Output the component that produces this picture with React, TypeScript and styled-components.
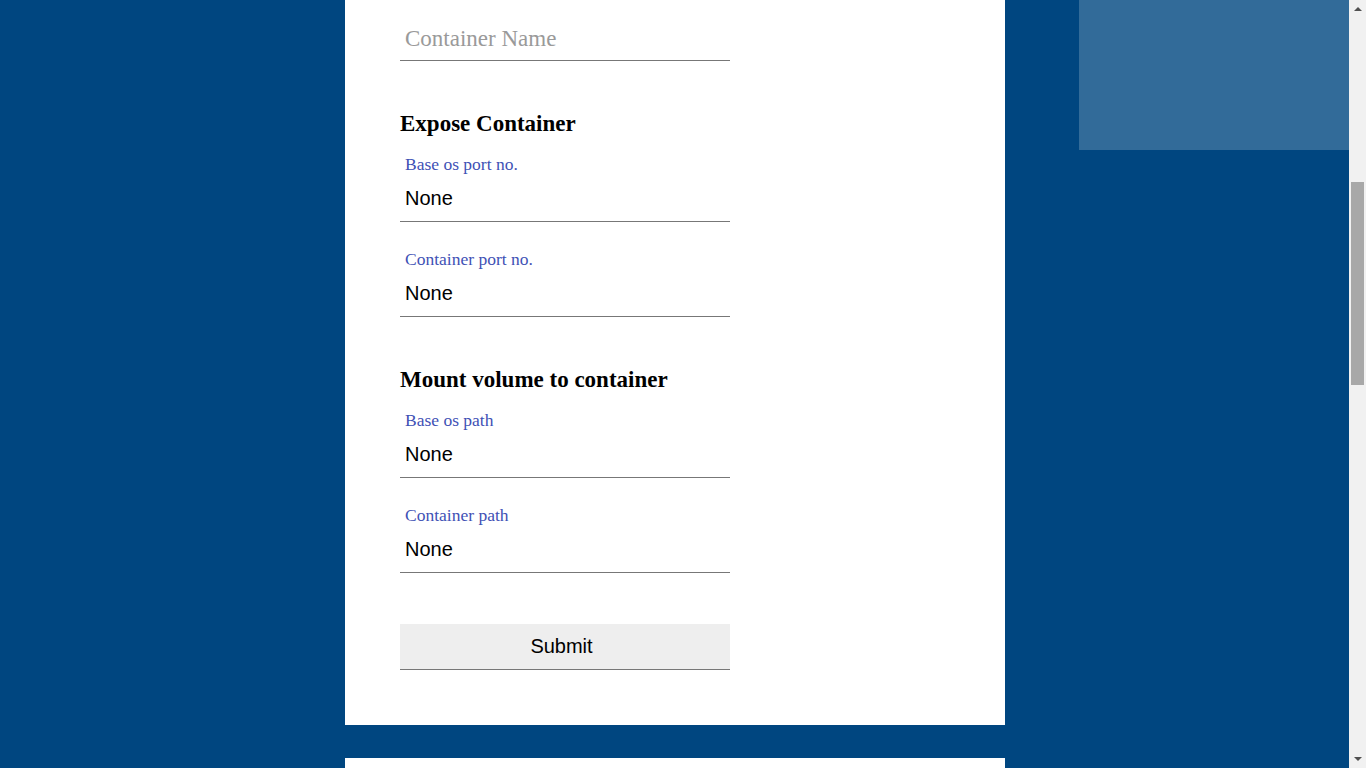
import React, { useLayoutEffect, useRef, useState } from "react";
import styled, { createGlobalStyle } from "styled-components";

const GlobalStyle = createGlobalStyle`
  html, body {
    margin: 0;
    padding: 0;
    height: 100%;
    overflow: hidden;
    background: #004680;
  }
  body {
    font-family: "Liberation Serif", "Times New Roman", serif;
  }
  #root { height: 100%; }
  * { box-sizing: border-box; }
`;

const Frame = styled.div`
  height: 100vh;
  display: flex;
  background: #004680;
`;

const ScrollArea = styled.div`
  flex: 1;
  height: 100%;
  overflow-y: scroll;
  overflow-x: hidden;
  scrollbar-width: none;
  &::-webkit-scrollbar { display: none; }
`;

const Rail = styled.div`
  width: 17px;
  height: 100%;
  background: #f1f1f1;
  display: flex;
  flex-direction: column;
`;

const ArrowButton = styled.div<{ $down?: boolean }>`
  height: 17px;
  display: flex;
  justify-content: center;
  align-items: ${(p) => (p.$down ? "flex-start" : "flex-start")};
  padding-top: ${(p) => (p.$down ? "6px" : "7px")};
  &::after {
    content: "";
    width: 0;
    height: 0;
    border-left: 4px solid transparent;
    border-right: 4px solid transparent;
    ${(p) =>
      p.$down ? "border-top: 4px solid #505050;" : "border-bottom: 4px solid #505050;"}
  }
`;

const Track = styled.div`
  flex: 1;
  display: flex;
  flex-direction: column;
  align-items: center;
`;

const Thumb = styled.div`
  width: 13px;
  background: #a8a8a8;
`;

const Layout = styled.div`
  display: flex;
  align-items: flex-start;
  gap: 74px;
  padding: 0 0 60px 345px;
`;

const MainColumn = styled.main`
  width: 660px;
  display: flex;
  flex-direction: column;
  gap: 33px;
`;

const Card = styled.section<{ $top?: number; $minHeight?: number }>`
  background: #ffffff;
  padding: ${(p) => (p.$top ? `${p.$top}px` : "55px")} 55px 55px;
  display: flex;
  flex-direction: column;
  min-height: ${(p) => (p.$minHeight ? `${p.$minHeight}px` : "0")};
`;

const Sidebar = styled.aside`
  width: 270px;
  height: 774px;
  background: #326b99;
`;

const Form = styled.form`
  width: 330px;
  display: flex;
  flex-direction: column;
`;

const SectionTitle = styled.h3`
  margin: 52px 0 19px;
  height: 22px;
  line-height: 22px;
  font-size: 23px;
  font-weight: bold;
  color: #000000;
  white-space: nowrap;
`;

const Field = styled.div<{ $first?: boolean }>`
  display: flex;
  flex-direction: column;
  margin-top: ${(p) => (p.$first ? "0" : "27px")};
`;

const Label = styled.label`
  height: 20px;
  line-height: 20px;
  margin-bottom: 2px;
  padding-left: 5px;
  font-size: 17.5px;
  color: #3f51b5;
  white-space: nowrap;
`;

const TextBox = styled.div<{ $placeholder?: boolean }>`
  width: 330px;
  height: 46px;
  border-bottom: 1px solid #777777;
  display: flex;
  align-items: center;
  padding: ${(p) => (p.$placeholder ? "2px 5px 0" : "0 5px")};
  color: ${(p) => (p.$placeholder ? "#9a9a9a" : "#000000")};
  font-family: ${(p) =>
    p.$placeholder ? `"Liberation Serif", "Times New Roman", serif` : `"Liberation Sans", Arial, sans-serif`};
  font-size: ${(p) => (p.$placeholder ? "23px" : "20px")};
  white-space: nowrap;
  cursor: text;
`;

const SubmitButton = styled.button`
  margin-top: 51px;
  width: 330px;
  height: 46px;
  border: none;
  border-bottom: 1px solid #777777;
  border-radius: 0;
  background: #eeeeee;
  color: #000000;
  font-family: "Liberation Sans", Arial, sans-serif;
  font-size: 20px;
  padding: 0 7px 0 0;
  cursor: pointer;
`;

type FieldProps = { label: string; first?: boolean };

const LabeledField: React.FC<FieldProps> = ({ label, first }) => (
  <Field $first={first}>
    <Label>{label}</Label>
    <TextBox role="textbox">None</TextBox>
  </Field>
);

const SCROLL_TOP = 624;
const ARROW = 17;

export default function App() {
  const ref = useRef<HTMLDivElement>(null);
  const [thumb, setThumb] = useState({ top: 165, size: 203 });

  const update = () => {
    const el = ref.current;
    if (!el) return;
    const track = el.clientHeight - ARROW * 2;
    const size = Math.max(20, Math.round((track * el.clientHeight) / el.scrollHeight));
    const max = el.scrollHeight - el.clientHeight;
    const top = max > 0 ? Math.round((el.scrollTop / max) * (track - size)) : 0;
    setThumb({ top, size });
  };

  useLayoutEffect(() => {
    const el = ref.current;
    if (!el) return;
    el.scrollTop = SCROLL_TOP;
    update();
    const t = window.setTimeout(() => {
      if (ref.current) ref.current.scrollTop = SCROLL_TOP;
      update();
    }, 0);
    return () => window.clearTimeout(t);
  }, []);

  return (
    <>
      <GlobalStyle />
      <Frame>
        <ScrollArea ref={ref} onScroll={update}>
          <Layout>
            <MainColumn>
              <Card $top={639}>
                <Form onSubmit={(e) => e.preventDefault()}>
                  <TextBox $placeholder role="textbox">Container Name</TextBox>
                  <SectionTitle>Expose Container</SectionTitle>
                  <LabeledField first label="Base os port no." />
                  <LabeledField label="Container port no." />
                  <SectionTitle>Mount volume to container</SectionTitle>
                  <LabeledField first label="Base os path" />
                  <LabeledField label="Container path" />
                  <SubmitButton type="submit">Submit</SubmitButton>
                </Form>
              </Card>
              <Card $minHeight={1335} />
            </MainColumn>
            <Sidebar />
          </Layout>
        </ScrollArea>
        <Rail aria-hidden="true">
          <ArrowButton />
          <Track>
            <Thumb style={{ marginTop: thumb.top, height: thumb.size }} />
          </Track>
          <ArrowButton $down />
        </Rail>
      </Frame>
    </>
  );
}
